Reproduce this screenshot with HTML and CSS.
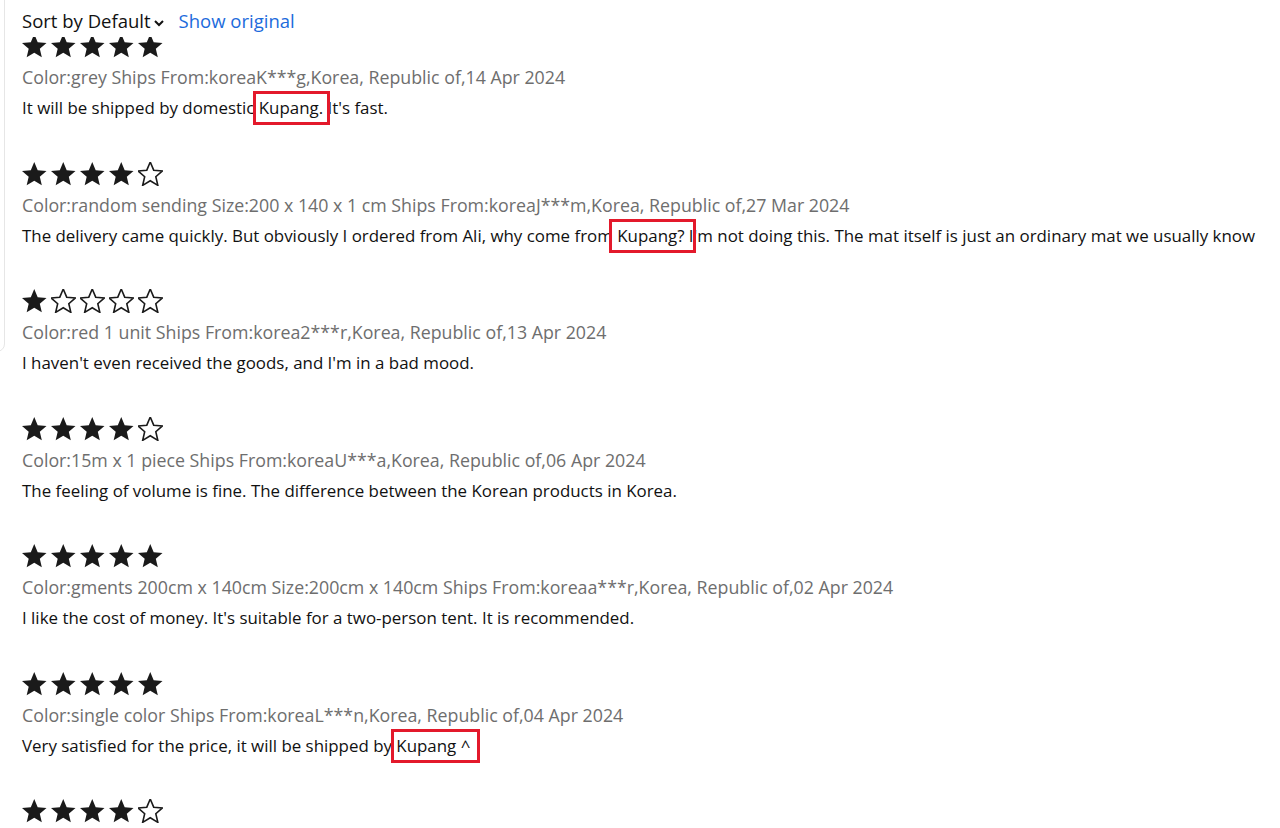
FILE: index.html
```html
<!DOCTYPE html>
<html lang="en">
<head>
<meta charset="utf-8">
<title>Reviews</title>
<link rel="stylesheet" href="styles.css">
</head>
<body>
<div class="panel-edge"></div>
<main class="reviews">
  <div class="sort-bar">
    <span class="sort">Sort by Default<svg class="chev" viewBox="0 0 12 12" width="12" height="12"><path d="M2 4l4 4 4-4" fill="none" stroke="#111" stroke-width="2"/></svg></span>
    <a class="show-original">Show original</a>
  </div>
  <ul class="list">
    <li class="review">
      <div class="stars"><svg viewBox="2 2 20 19.5"><path class="f" d="M12 17.27L18.18 21l-1.64-7.03L22 9.24l-7.19-.61L12 2 9.19 8.63 2 9.24l5.46 4.73L5.82 21z"/></svg><svg viewBox="2 2 20 19.5"><path class="f" d="M12 17.27L18.18 21l-1.64-7.03L22 9.24l-7.19-.61L12 2 9.19 8.63 2 9.24l5.46 4.73L5.82 21z"/></svg><svg viewBox="2 2 20 19.5"><path class="f" d="M12 17.27L18.18 21l-1.64-7.03L22 9.24l-7.19-.61L12 2 9.19 8.63 2 9.24l5.46 4.73L5.82 21z"/></svg><svg viewBox="2 2 20 19.5"><path class="f" d="M12 17.27L18.18 21l-1.64-7.03L22 9.24l-7.19-.61L12 2 9.19 8.63 2 9.24l5.46 4.73L5.82 21z"/></svg><svg viewBox="2 2 20 19.5"><path class="f" d="M12 17.27L18.18 21l-1.64-7.03L22 9.24l-7.19-.61L12 2 9.19 8.63 2 9.24l5.46 4.73L5.82 21z"/></svg></div>
      <div class="meta">Color:grey Ships From:koreaK***g,Korea, Republic of,14 Apr 2024</div>
      <p class="text">It will be shipped by domestic <span class="mark m1">Kupang.</span> It's fast.</p>
    </li>
    <li class="review">
      <div class="stars"><svg viewBox="2 2 20 19.5"><path class="f" d="M12 17.27L18.18 21l-1.64-7.03L22 9.24l-7.19-.61L12 2 9.19 8.63 2 9.24l5.46 4.73L5.82 21z"/></svg><svg viewBox="2 2 20 19.5"><path class="f" d="M12 17.27L18.18 21l-1.64-7.03L22 9.24l-7.19-.61L12 2 9.19 8.63 2 9.24l5.46 4.73L5.82 21z"/></svg><svg viewBox="2 2 20 19.5"><path class="f" d="M12 17.27L18.18 21l-1.64-7.03L22 9.24l-7.19-.61L12 2 9.19 8.63 2 9.24l5.46 4.73L5.82 21z"/></svg><svg viewBox="2 2 20 19.5"><path class="f" d="M12 17.27L18.18 21l-1.64-7.03L22 9.24l-7.19-.61L12 2 9.19 8.63 2 9.24l5.46 4.73L5.82 21z"/></svg><svg viewBox="2 2 20 19.5"><path class="o" d="M12 17.27L18.18 21l-1.64-7.03L22 9.24l-7.19-.61L12 2 9.19 8.63 2 9.24l5.46 4.73L5.82 21z"/></svg></div>
      <div class="meta">Color:random sending Size:200 x 140 x 1 cm Ships From:koreaJ***m,Korea, Republic of,27 Mar 2024</div>
      <p class="text">The delivery came quickly. But obviously I ordered from Ali, why come from <span class="mark m2">Kupang?</span> I'm not doing this. The mat itself is just an ordinary mat we usually know</p>
    </li>
    <li class="review">
      <div class="stars"><svg viewBox="2 2 20 19.5"><path class="f" d="M12 17.27L18.18 21l-1.64-7.03L22 9.24l-7.19-.61L12 2 9.19 8.63 2 9.24l5.46 4.73L5.82 21z"/></svg><svg viewBox="2 2 20 19.5"><path class="o" d="M12 17.27L18.18 21l-1.64-7.03L22 9.24l-7.19-.61L12 2 9.19 8.63 2 9.24l5.46 4.73L5.82 21z"/></svg><svg viewBox="2 2 20 19.5"><path class="o" d="M12 17.27L18.18 21l-1.64-7.03L22 9.24l-7.19-.61L12 2 9.19 8.63 2 9.24l5.46 4.73L5.82 21z"/></svg><svg viewBox="2 2 20 19.5"><path class="o" d="M12 17.27L18.18 21l-1.64-7.03L22 9.24l-7.19-.61L12 2 9.19 8.63 2 9.24l5.46 4.73L5.82 21z"/></svg><svg viewBox="2 2 20 19.5"><path class="o" d="M12 17.27L18.18 21l-1.64-7.03L22 9.24l-7.19-.61L12 2 9.19 8.63 2 9.24l5.46 4.73L5.82 21z"/></svg></div>
      <div class="meta">Color:red 1 unit Ships From:korea2***r,Korea, Republic of,13 Apr 2024</div>
      <p class="text">I haven't even received the goods, and I'm in a bad mood.</p>
    </li>
    <li class="review">
      <div class="stars"><svg viewBox="2 2 20 19.5"><path class="f" d="M12 17.27L18.18 21l-1.64-7.03L22 9.24l-7.19-.61L12 2 9.19 8.63 2 9.24l5.46 4.73L5.82 21z"/></svg><svg viewBox="2 2 20 19.5"><path class="f" d="M12 17.27L18.18 21l-1.64-7.03L22 9.24l-7.19-.61L12 2 9.19 8.63 2 9.24l5.46 4.73L5.82 21z"/></svg><svg viewBox="2 2 20 19.5"><path class="f" d="M12 17.27L18.18 21l-1.64-7.03L22 9.24l-7.19-.61L12 2 9.19 8.63 2 9.24l5.46 4.73L5.82 21z"/></svg><svg viewBox="2 2 20 19.5"><path class="f" d="M12 17.27L18.18 21l-1.64-7.03L22 9.24l-7.19-.61L12 2 9.19 8.63 2 9.24l5.46 4.73L5.82 21z"/></svg><svg viewBox="2 2 20 19.5"><path class="o" d="M12 17.27L18.18 21l-1.64-7.03L22 9.24l-7.19-.61L12 2 9.19 8.63 2 9.24l5.46 4.73L5.82 21z"/></svg></div>
      <div class="meta">Color:15m x 1 piece Ships From:koreaU***a,Korea, Republic of,06 Apr 2024</div>
      <p class="text">The feeling of volume is fine. The difference between the Korean products in Korea.</p>
    </li>
    <li class="review">
      <div class="stars"><svg viewBox="2 2 20 19.5"><path class="f" d="M12 17.27L18.18 21l-1.64-7.03L22 9.24l-7.19-.61L12 2 9.19 8.63 2 9.24l5.46 4.73L5.82 21z"/></svg><svg viewBox="2 2 20 19.5"><path class="f" d="M12 17.27L18.18 21l-1.64-7.03L22 9.24l-7.19-.61L12 2 9.19 8.63 2 9.24l5.46 4.73L5.82 21z"/></svg><svg viewBox="2 2 20 19.5"><path class="f" d="M12 17.27L18.18 21l-1.64-7.03L22 9.24l-7.19-.61L12 2 9.19 8.63 2 9.24l5.46 4.73L5.82 21z"/></svg><svg viewBox="2 2 20 19.5"><path class="f" d="M12 17.27L18.18 21l-1.64-7.03L22 9.24l-7.19-.61L12 2 9.19 8.63 2 9.24l5.46 4.73L5.82 21z"/></svg><svg viewBox="2 2 20 19.5"><path class="f" d="M12 17.27L18.18 21l-1.64-7.03L22 9.24l-7.19-.61L12 2 9.19 8.63 2 9.24l5.46 4.73L5.82 21z"/></svg></div>
      <div class="meta">Color:gments 200cm x 140cm Size:200cm x 140cm Ships From:koreaa***r,Korea, Republic of,02 Apr 2024</div>
      <p class="text">I like the cost of money. It's suitable for a two-person tent. It is recommended.</p>
    </li>
    <li class="review">
      <div class="stars"><svg viewBox="2 2 20 19.5"><path class="f" d="M12 17.27L18.18 21l-1.64-7.03L22 9.24l-7.19-.61L12 2 9.19 8.63 2 9.24l5.46 4.73L5.82 21z"/></svg><svg viewBox="2 2 20 19.5"><path class="f" d="M12 17.27L18.18 21l-1.64-7.03L22 9.24l-7.19-.61L12 2 9.19 8.63 2 9.24l5.46 4.73L5.82 21z"/></svg><svg viewBox="2 2 20 19.5"><path class="f" d="M12 17.27L18.18 21l-1.64-7.03L22 9.24l-7.19-.61L12 2 9.19 8.63 2 9.24l5.46 4.73L5.82 21z"/></svg><svg viewBox="2 2 20 19.5"><path class="f" d="M12 17.27L18.18 21l-1.64-7.03L22 9.24l-7.19-.61L12 2 9.19 8.63 2 9.24l5.46 4.73L5.82 21z"/></svg><svg viewBox="2 2 20 19.5"><path class="f" d="M12 17.27L18.18 21l-1.64-7.03L22 9.24l-7.19-.61L12 2 9.19 8.63 2 9.24l5.46 4.73L5.82 21z"/></svg></div>
      <div class="meta">Color:single color Ships From:koreaL***n,Korea, Republic of,04 Apr 2024</div>
      <p class="text">Very satisfied for the price, it will be shipped by <span class="mark m3">Kupang ^</span></p>
    </li>
    <li class="review">
      <div class="stars"><svg viewBox="2 2 20 19.5"><path class="f" d="M12 17.27L18.18 21l-1.64-7.03L22 9.24l-7.19-.61L12 2 9.19 8.63 2 9.24l5.46 4.73L5.82 21z"/></svg><svg viewBox="2 2 20 19.5"><path class="f" d="M12 17.27L18.18 21l-1.64-7.03L22 9.24l-7.19-.61L12 2 9.19 8.63 2 9.24l5.46 4.73L5.82 21z"/></svg><svg viewBox="2 2 20 19.5"><path class="f" d="M12 17.27L18.18 21l-1.64-7.03L22 9.24l-7.19-.61L12 2 9.19 8.63 2 9.24l5.46 4.73L5.82 21z"/></svg><svg viewBox="2 2 20 19.5"><path class="f" d="M12 17.27L18.18 21l-1.64-7.03L22 9.24l-7.19-.61L12 2 9.19 8.63 2 9.24l5.46 4.73L5.82 21z"/></svg><svg viewBox="2 2 20 19.5"><path class="o" d="M12 17.27L18.18 21l-1.64-7.03L22 9.24l-7.19-.61L12 2 9.19 8.63 2 9.24l5.46 4.73L5.82 21z"/></svg></div>
    </li>
  </ul>
</main>
</body>
</html>
```
FILE: styles.css
```css
html, body {
  margin: 0;
  padding: 0;
  background: #fff;
  overflow: hidden;
}
body {
  font-family: "Open Sans", "Noto Sans", sans-serif;
  color: #111;
  position: relative;
  height: 828px;
}
.panel-edge {
  position: absolute;
  left: -8px;
  top: -10px;
  width: 11px;
  height: 360px;
  border: 1px solid #e6e6e6;
  border-radius: 0 0 8px 0;
}
.reviews {
  padding-left: 22px;
}
.sort-bar {
  position: relative;
  z-index: 1;
  height: 37px;
  background: #fff;
  display: flex;
  align-items: flex-start;
  gap: 14px;
  padding-top: 8px;
  box-sizing: border-box;
  font-size: 18.5px;
  line-height: 26px;
}
.sort {
  display: inline-flex;
  align-items: center;
  color: #111;
}
.chev {
  margin-left: 2px;
  margin-top: 3px;
}
.show-original {
  color: #1c6bdc;
}
.list {
  list-style: none;
  margin: -3px 0 0;
  padding: 0;
}
.review {
  height: 127.55px;
}
.stars {
  display: flex;
  gap: 4.5px;
  height: 24px;
}
.stars svg {
  width: 24.5px;
  height: 24px;
  display: block;
}
.stars .f {
  fill: #1a1a1a;
}
.stars .o {
  fill: none;
  stroke: #1a1a1a;
  stroke-width: 1.3;
  stroke-linejoin: miter;
}
.meta {
  margin-top: 7px;
  font-size: 17.8px;
  line-height: 24px;
  color: #6e6e6e;
  white-space: nowrap;
}
.text {
  margin: 7px 0 0;
  font-size: 16.9px;
  line-height: 24px;
  color: #111;
  white-space: nowrap;
}
.mark {
  position: relative;
}
.mark::after {
  content: "";
  position: absolute;
  border: 3px solid #e3192b;
  top: -5px;
  bottom: -6px;
}
.m1::after {
  left: -6px;
  right: -7px;
}
.m2::after {
  left: -8px;
  right: -12px;
}
.m3::after {
  left: -5px;
  right: -10px;
}
```
